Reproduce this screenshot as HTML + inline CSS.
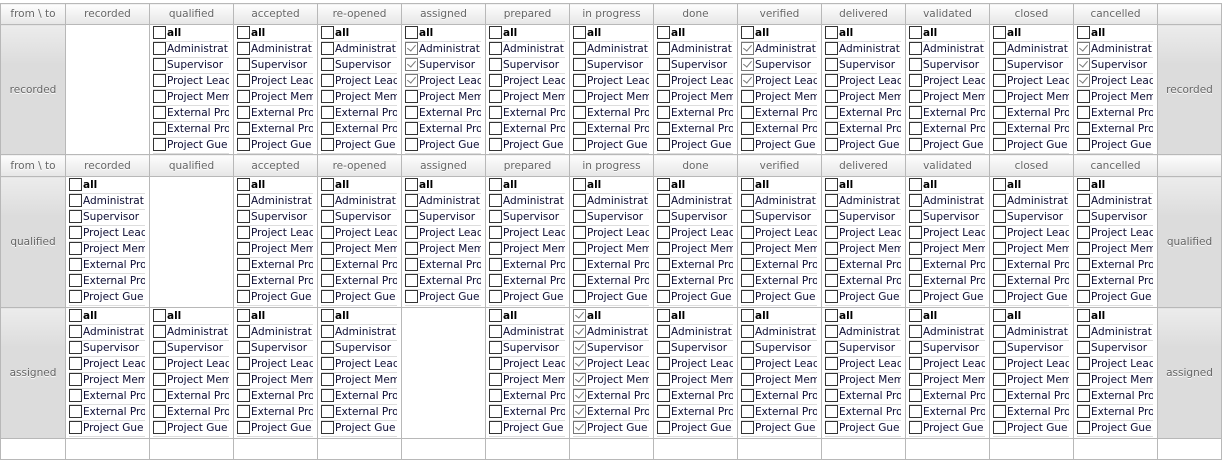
<!DOCTYPE html>
<html><head><meta charset="utf-8"><style>
html,body{margin:0;padding:0;background:#fff;width:1223px;height:445px;overflow:hidden}
table{position:absolute;left:0;top:3px;border-collapse:collapse;table-layout:fixed;font-family:"DejaVu Sans","Liberation Sans",sans-serif;font-size:10.5px}
td,th{border:1px solid #b8b8b8;padding:0;vertical-align:top}
th{height:20px;font-weight:normal;color:#666;text-shadow:0 1px 0 #fff;background:linear-gradient(#fdfdfd,#e6e6e6);vertical-align:middle;text-align:center}
tr.h2 th{height:21px}
td.s{background:linear-gradient(#ececec,#dcdcdc 30%,#dcdcdc);color:#666;text-shadow:0 1px 0 #fff;vertical-align:middle;text-align:center}
td{height:129px}
tr.r1 td{height:128px}
td.b{padding-left:3px;padding-top:1px}
p{margin:0;height:15px;line-height:15px;border-bottom:1px solid #ddd;width:76px;overflow:hidden;white-space:nowrap;color:#0b0b33;position:relative}
p:first-child{font-weight:bold;color:#000}
b{display:inline-block;width:11px;height:11px;border:1px solid #333;vertical-align:-3px;margin-right:1px;background:#fff;position:relative;overflow:hidden}
p.k b{border-color:#777}
p.k b:after{content:"";position:absolute;left:3px;top:0px;width:4px;height:7px;border-right:1.5px solid #777;border-bottom:1.5px solid #777;transform:rotate(40deg)}
tr.x td{height:20px}
</style></head><body>
<table>
<colgroup><col style="width:65px"><col span="13" style="width:84px"><col style="width:64px"></colgroup>
<tr><th>from \ to</th><th>recorded</th><th>qualified</th><th>accepted</th><th>re-opened</th><th>assigned</th><th>prepared</th><th>in progress</th><th>done</th><th>verified</th><th>delivered</th><th>validated</th><th>closed</th><th>cancelled</th><th></th></tr>
<tr class="r1"><td class="s">recorded</td><td></td>
<td class="b"><p><b></b>all</p><p><b></b>Administrat</p><p><b></b>Supervisor</p><p><b></b>Project Lead</p><p><b></b>Project Mem</p><p><b></b>External Pro</p><p><b></b>External Pro</p><p><b></b>Project Gue</p></td>
<td class="b"><p><b></b>all</p><p><b></b>Administrat</p><p><b></b>Supervisor</p><p><b></b>Project Lead</p><p><b></b>Project Mem</p><p><b></b>External Pro</p><p><b></b>External Pro</p><p><b></b>Project Gue</p></td>
<td class="b"><p><b></b>all</p><p><b></b>Administrat</p><p><b></b>Supervisor</p><p><b></b>Project Lead</p><p><b></b>Project Mem</p><p><b></b>External Pro</p><p><b></b>External Pro</p><p><b></b>Project Gue</p></td>
<td class="b"><p><b></b>all</p><p class="k"><b></b>Administrat</p><p class="k"><b></b>Supervisor</p><p class="k"><b></b>Project Lead</p><p><b></b>Project Mem</p><p><b></b>External Pro</p><p><b></b>External Pro</p><p><b></b>Project Gue</p></td>
<td class="b"><p><b></b>all</p><p><b></b>Administrat</p><p><b></b>Supervisor</p><p><b></b>Project Lead</p><p><b></b>Project Mem</p><p><b></b>External Pro</p><p><b></b>External Pro</p><p><b></b>Project Gue</p></td>
<td class="b"><p><b></b>all</p><p><b></b>Administrat</p><p><b></b>Supervisor</p><p><b></b>Project Lead</p><p><b></b>Project Mem</p><p><b></b>External Pro</p><p><b></b>External Pro</p><p><b></b>Project Gue</p></td>
<td class="b"><p><b></b>all</p><p><b></b>Administrat</p><p><b></b>Supervisor</p><p><b></b>Project Lead</p><p><b></b>Project Mem</p><p><b></b>External Pro</p><p><b></b>External Pro</p><p><b></b>Project Gue</p></td>
<td class="b"><p><b></b>all</p><p class="k"><b></b>Administrat</p><p class="k"><b></b>Supervisor</p><p class="k"><b></b>Project Lead</p><p><b></b>Project Mem</p><p><b></b>External Pro</p><p><b></b>External Pro</p><p><b></b>Project Gue</p></td>
<td class="b"><p><b></b>all</p><p><b></b>Administrat</p><p><b></b>Supervisor</p><p><b></b>Project Lead</p><p><b></b>Project Mem</p><p><b></b>External Pro</p><p><b></b>External Pro</p><p><b></b>Project Gue</p></td>
<td class="b"><p><b></b>all</p><p><b></b>Administrat</p><p><b></b>Supervisor</p><p><b></b>Project Lead</p><p><b></b>Project Mem</p><p><b></b>External Pro</p><p><b></b>External Pro</p><p><b></b>Project Gue</p></td>
<td class="b"><p><b></b>all</p><p><b></b>Administrat</p><p><b></b>Supervisor</p><p><b></b>Project Lead</p><p><b></b>Project Mem</p><p><b></b>External Pro</p><p><b></b>External Pro</p><p><b></b>Project Gue</p></td>
<td class="b"><p><b></b>all</p><p class="k"><b></b>Administrat</p><p class="k"><b></b>Supervisor</p><p class="k"><b></b>Project Lead</p><p><b></b>Project Mem</p><p><b></b>External Pro</p><p><b></b>External Pro</p><p><b></b>Project Gue</p></td>
<td class="s">recorded</td></tr>
<tr class="h2"><th>from \ to</th><th>recorded</th><th>qualified</th><th>accepted</th><th>re-opened</th><th>assigned</th><th>prepared</th><th>in progress</th><th>done</th><th>verified</th><th>delivered</th><th>validated</th><th>closed</th><th>cancelled</th><th></th></tr>
<tr><td class="s">qualified</td>
<td class="b"><p><b></b>all</p><p><b></b>Administrat</p><p><b></b>Supervisor</p><p><b></b>Project Lead</p><p><b></b>Project Mem</p><p><b></b>External Pro</p><p><b></b>External Pro</p><p><b></b>Project Gue</p></td>
<td></td>
<td class="b"><p><b></b>all</p><p><b></b>Administrat</p><p><b></b>Supervisor</p><p><b></b>Project Lead</p><p><b></b>Project Mem</p><p><b></b>External Pro</p><p><b></b>External Pro</p><p><b></b>Project Gue</p></td>
<td class="b"><p><b></b>all</p><p><b></b>Administrat</p><p><b></b>Supervisor</p><p><b></b>Project Lead</p><p><b></b>Project Mem</p><p><b></b>External Pro</p><p><b></b>External Pro</p><p><b></b>Project Gue</p></td>
<td class="b"><p><b></b>all</p><p><b></b>Administrat</p><p><b></b>Supervisor</p><p><b></b>Project Lead</p><p><b></b>Project Mem</p><p><b></b>External Pro</p><p><b></b>External Pro</p><p><b></b>Project Gue</p></td>
<td class="b"><p><b></b>all</p><p><b></b>Administrat</p><p><b></b>Supervisor</p><p><b></b>Project Lead</p><p><b></b>Project Mem</p><p><b></b>External Pro</p><p><b></b>External Pro</p><p><b></b>Project Gue</p></td>
<td class="b"><p><b></b>all</p><p><b></b>Administrat</p><p><b></b>Supervisor</p><p><b></b>Project Lead</p><p><b></b>Project Mem</p><p><b></b>External Pro</p><p><b></b>External Pro</p><p><b></b>Project Gue</p></td>
<td class="b"><p><b></b>all</p><p><b></b>Administrat</p><p><b></b>Supervisor</p><p><b></b>Project Lead</p><p><b></b>Project Mem</p><p><b></b>External Pro</p><p><b></b>External Pro</p><p><b></b>Project Gue</p></td>
<td class="b"><p><b></b>all</p><p><b></b>Administrat</p><p><b></b>Supervisor</p><p><b></b>Project Lead</p><p><b></b>Project Mem</p><p><b></b>External Pro</p><p><b></b>External Pro</p><p><b></b>Project Gue</p></td>
<td class="b"><p><b></b>all</p><p><b></b>Administrat</p><p><b></b>Supervisor</p><p><b></b>Project Lead</p><p><b></b>Project Mem</p><p><b></b>External Pro</p><p><b></b>External Pro</p><p><b></b>Project Gue</p></td>
<td class="b"><p><b></b>all</p><p><b></b>Administrat</p><p><b></b>Supervisor</p><p><b></b>Project Lead</p><p><b></b>Project Mem</p><p><b></b>External Pro</p><p><b></b>External Pro</p><p><b></b>Project Gue</p></td>
<td class="b"><p><b></b>all</p><p><b></b>Administrat</p><p><b></b>Supervisor</p><p><b></b>Project Lead</p><p><b></b>Project Mem</p><p><b></b>External Pro</p><p><b></b>External Pro</p><p><b></b>Project Gue</p></td>
<td class="b"><p><b></b>all</p><p><b></b>Administrat</p><p><b></b>Supervisor</p><p><b></b>Project Lead</p><p><b></b>Project Mem</p><p><b></b>External Pro</p><p><b></b>External Pro</p><p><b></b>Project Gue</p></td>
<td class="s">qualified</td></tr>
<tr><td class="s">assigned</td>
<td class="b"><p><b></b>all</p><p><b></b>Administrat</p><p><b></b>Supervisor</p><p><b></b>Project Lead</p><p><b></b>Project Mem</p><p><b></b>External Pro</p><p><b></b>External Pro</p><p><b></b>Project Gue</p></td>
<td class="b"><p><b></b>all</p><p><b></b>Administrat</p><p><b></b>Supervisor</p><p><b></b>Project Lead</p><p><b></b>Project Mem</p><p><b></b>External Pro</p><p><b></b>External Pro</p><p><b></b>Project Gue</p></td>
<td class="b"><p><b></b>all</p><p><b></b>Administrat</p><p><b></b>Supervisor</p><p><b></b>Project Lead</p><p><b></b>Project Mem</p><p><b></b>External Pro</p><p><b></b>External Pro</p><p><b></b>Project Gue</p></td>
<td class="b"><p><b></b>all</p><p><b></b>Administrat</p><p><b></b>Supervisor</p><p><b></b>Project Lead</p><p><b></b>Project Mem</p><p><b></b>External Pro</p><p><b></b>External Pro</p><p><b></b>Project Gue</p></td>
<td></td>
<td class="b"><p><b></b>all</p><p><b></b>Administrat</p><p><b></b>Supervisor</p><p><b></b>Project Lead</p><p><b></b>Project Mem</p><p><b></b>External Pro</p><p><b></b>External Pro</p><p><b></b>Project Gue</p></td>
<td class="b"><p class="k"><b></b>all</p><p class="k"><b></b>Administrat</p><p class="k"><b></b>Supervisor</p><p class="k"><b></b>Project Lead</p><p class="k"><b></b>Project Mem</p><p class="k"><b></b>External Pro</p><p class="k"><b></b>External Pro</p><p class="k"><b></b>Project Gue</p></td>
<td class="b"><p><b></b>all</p><p><b></b>Administrat</p><p><b></b>Supervisor</p><p><b></b>Project Lead</p><p><b></b>Project Mem</p><p><b></b>External Pro</p><p><b></b>External Pro</p><p><b></b>Project Gue</p></td>
<td class="b"><p><b></b>all</p><p><b></b>Administrat</p><p><b></b>Supervisor</p><p><b></b>Project Lead</p><p><b></b>Project Mem</p><p><b></b>External Pro</p><p><b></b>External Pro</p><p><b></b>Project Gue</p></td>
<td class="b"><p><b></b>all</p><p><b></b>Administrat</p><p><b></b>Supervisor</p><p><b></b>Project Lead</p><p><b></b>Project Mem</p><p><b></b>External Pro</p><p><b></b>External Pro</p><p><b></b>Project Gue</p></td>
<td class="b"><p><b></b>all</p><p><b></b>Administrat</p><p><b></b>Supervisor</p><p><b></b>Project Lead</p><p><b></b>Project Mem</p><p><b></b>External Pro</p><p><b></b>External Pro</p><p><b></b>Project Gue</p></td>
<td class="b"><p><b></b>all</p><p><b></b>Administrat</p><p><b></b>Supervisor</p><p><b></b>Project Lead</p><p><b></b>Project Mem</p><p><b></b>External Pro</p><p><b></b>External Pro</p><p><b></b>Project Gue</p></td>
<td class="b"><p><b></b>all</p><p><b></b>Administrat</p><p><b></b>Supervisor</p><p><b></b>Project Lead</p><p><b></b>Project Mem</p><p><b></b>External Pro</p><p><b></b>External Pro</p><p><b></b>Project Gue</p></td>
<td class="s">assigned</td></tr>
<tr class="x"><td></td><td></td><td></td><td></td><td></td><td></td><td></td><td></td><td></td><td></td><td></td><td></td><td></td><td></td><td></td></tr>
</table>
</body></html>
